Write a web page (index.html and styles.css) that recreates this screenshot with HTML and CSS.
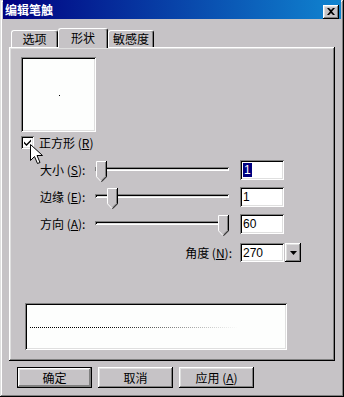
FILE: index.html
```html
<!DOCTYPE html>
<html lang="zh-CN">
<head>
  <meta charset="UTF-8">
  <title>编辑笔触</title>
  <link rel="stylesheet" href="styles.css">
</head>
<body>
  <div class="window">
    <div class="titlebar">
      <span class="title">编辑笔触</span>
      <button class="close-btn">
        <svg width="8" height="7" viewBox="0 0 8 7"><path d="M0 0h2l2 2 2-2h2L5 3.5 8 7H6L4 5 2 7H0l3-3.5z" fill="#000"/></svg>
      </button>
    </div>

    <div class="content">
      <!-- Tabs -->
      <div class="tabs">
        <div class="tab tab-first">选项</div>
        <div class="tab tab-active">形状</div>
        <div class="tab">敏感度</div>
      </div>

      <div class="panel">
        <div class="preview"><span class="dot"></span></div>

        <label class="check-row">
          <span class="checkbox">
            <svg width="7" height="7" viewBox="0 0 7 7"><path d="M0 2.5l2.5 2.5 4.5-4.5v2l-4.5 4.5-2.5-2.5z" fill="#000"/></svg>
          </span>
          <span>正方形 (<u>R</u>)</span>
        </label>

        <!-- Slider settings -->
        <div class="settings">
          <span class="label">大小 (<u>S</u>):</span>
          <div class="slider">
            <div class="track"></div>
            <svg class="thumb" style="left: 1px" width="11" height="21" viewBox="0 0 11 21">
              <polygon points="0,0 11,0 11,16 5.5,21 0,16" fill="#c6c3c6"/>
              <polyline points="5,20.5 0.5,15.8 0.5,0.5 10,0.5" fill="none" stroke="#fff"/>
              <polyline points="9.5,1 9.5,15.3 5.5,19.3" fill="none" stroke="#808080"/>
              <polyline points="10.5,0 10.5,15.8 5.5,20.8" fill="none" stroke="#000"/>
            </svg>
          </div>
          <div class="edit"><span class="sel">1</span></div>

          <span class="label">边缘 (<u>E</u>):</span>
          <div class="slider">
            <div class="track"></div>
            <svg class="thumb" style="left: 12px" width="11" height="21" viewBox="0 0 11 21">
              <polygon points="0,0 11,0 11,16 5.5,21 0,16" fill="#c6c3c6"/>
              <polyline points="5,20.5 0.5,15.8 0.5,0.5 10,0.5" fill="none" stroke="#fff"/>
              <polyline points="9.5,1 9.5,15.3 5.5,19.3" fill="none" stroke="#808080"/>
              <polyline points="10.5,0 10.5,15.8 5.5,20.8" fill="none" stroke="#000"/>
            </svg>
          </div>
          <div class="edit">1</div>

          <span class="label">方向 (<u>A</u>):</span>
          <div class="slider">
            <div class="track"></div>
            <svg class="thumb" style="left: 123px" width="11" height="21" viewBox="0 0 11 21">
              <polygon points="0,0 11,0 11,16 5.5,21 0,16" fill="#c6c3c6"/>
              <polyline points="5,20.5 0.5,15.8 0.5,0.5 10,0.5" fill="none" stroke="#fff"/>
              <polyline points="9.5,1 9.5,15.3 5.5,19.3" fill="none" stroke="#808080"/>
              <polyline points="10.5,0 10.5,15.8 5.5,20.8" fill="none" stroke="#000"/>
            </svg>
          </div>
          <div class="edit">60</div>

          <span class="label label-angle">角度 (<u>N</u>):</span>
          <div class="combo">
            <div class="edit edit-combo">270</div>
            <button class="combo-btn">
              <svg width="7" height="4" viewBox="0 0 7 4"><path d="M0 0h7L3.5 4z" fill="#000"/></svg>
            </button>
          </div>
        </div>

        <div class="stroke-preview"><div class="dotted"></div></div>
      </div>

      <div class="buttons">
        <button class="btn btn-default">确定</button>
        <button class="btn">取消</button>
        <button class="btn">应用 (<u>A</u>)</button>
      </div>
    </div>

    <!-- Mouse pointer -->
    <svg class="cursor" width="13" height="21" viewBox="0 0 13 21">
      <path d="M0.5 0.5v16l4-4 3 7 2.5-1-3-7h5.5z" fill="#fff" stroke="#000"/>
    </svg>
  </div>
</body>
</html>
```

FILE: styles.css
```css
/* General styles */
body {
  margin: 0;
  font-family: "Noto Sans CJK SC", "Liberation Sans", sans-serif;
  font-size: 12px;
  color: #000;
  background: #c6c3c6;
}

button {
  font-family: inherit;
  font-size: 12px;
  padding: 0;
  border: none;
  background: #c6c3c6;
}

/* Dialog window */
.window {
  position: relative;
  width: 344px;
  height: 397px;
  box-sizing: border-box;
  padding: 0 3px 3px 3px;
  background: #c6c3c6;
  box-shadow: inset -1px -1px #000, inset 1px 1px #dfdfdf,
              inset -2px -2px #808080, inset 2px 2px #fff;
  display: flex;
  flex-direction: column;
}

/* Title bar */
.titlebar {
  height: 19px;
  display: flex;
  align-items: center;
  justify-content: space-between;
  padding: 0 2px;
  background: linear-gradient(90deg, #000080, #1084d0);
}

.title {
  color: #fff;
  font-weight: bold;
  line-height: 19px;
}

.close-btn {
  width: 16px;
  height: 14px;
  margin-top: 4px;
  display: flex;
  align-items: center;
  justify-content: center;
  box-shadow: inset -1px -1px #000, inset 1px 1px #fff,
              inset -2px -2px #808080, inset 2px 2px #dfdfdf;
}

.content {
  padding: 9px 6px 0;
}

/* Tabs */
.tabs {
  height: 19px;
  display: flex;
  align-items: flex-end;
  padding-left: 2px;
}

.tab {
  width: 46px;
  height: 17px;
  box-sizing: border-box;
  border-top: 1px solid #fff;
  border-left: 1px solid #fff;
  border-right: 1px solid #000;
  border-radius: 3px 3px 0 0;
  box-shadow: inset -1px 0 #808080;
  text-align: center;
  line-height: 16px;
  background: #c6c3c6;
}

.tab-first {
  width: 47px;
}

.tab-active {
  position: relative;
  z-index: 1;
  width: 50px;
  height: 20px;
  margin-bottom: -1px;
  line-height: 17px;
}

/* Main panel */
.panel {
  height: 314px;
  box-sizing: border-box;
  padding: 10px 12px 0;
  box-shadow: inset -1px -1px #000, inset 1px 1px #fff,
              inset -2px -2px #808080, inset 2px 2px #dfdfdf;
}

.preview {
  width: 75px;
  height: 75px;
  position: relative;
  background: #fdfefd;
  box-shadow: inset 1px 1px #808080, inset -1px -1px #fff,
              inset 2px 2px #000, inset -2px -2px #dfdfdf;
}

.dot {
  position: absolute;
  left: 38px;
  top: 38px;
  width: 1px;
  height: 1px;
  background: #000;
}

.check-row {
  display: flex;
  align-items: center;
  gap: 5px;
  margin-top: 4px;
  height: 13px;
}

.checkbox {
  width: 13px;
  height: 13px;
  display: flex;
  align-items: center;
  justify-content: center;
  background: #fff;
  box-shadow: inset 1px 1px #808080, inset -1px -1px #fff,
              inset 2px 2px #000, inset -2px -2px #dfdfdf;
}

/* Slider grid */
.settings {
  display: grid;
  grid-template-columns: 44px 134px 44px;
  grid-auto-rows: 20px;
  column-gap: 11px;
  row-gap: 7px;
  margin: 11px 0 0 19px;
}

.label {
  line-height: 20px;
  white-space: nowrap;
}

.label-angle {
  grid-column: 1 / 3;
  justify-self: end;
  margin-right: -3px;
  margin-top: 2px;
}

.slider {
  position: relative;
}

.track {
  margin-top: 7px;
  height: 4px;
  box-shadow: inset 1px 1px #808080, inset -1px -1px #fff,
              inset 2px 2px #000, inset -2px -2px #dfdfdf;
}

.thumb {
  position: absolute;
  top: 1px;
}

.edit {
  height: 20px;
  box-sizing: border-box;
  padding: 3px 3px 0;
  background: #fff;
  font-family: "Liberation Sans", sans-serif;
  line-height: 14px;
  box-shadow: inset 1px 1px #808080, inset -1px -1px #fff,
              inset 2px 2px #000, inset -2px -2px #dfdfdf;
}

.sel {
  background: #000080;
  color: #fff;
  padding: 0 1px;
}

.combo {
  display: flex;
  gap: 1px;
  margin-top: 2px;
}

.edit-combo {
  width: 44px;
  flex: none;
  height: 19px;
}

.combo-btn {
  width: 16px;
  height: 19px;
  flex: none;
  display: flex;
  align-items: center;
  justify-content: center;
  box-shadow: inset -1px -1px #000, inset 1px 1px #fff,
              inset -2px -2px #808080, inset 2px 2px #dfdfdf;
}

/* Stroke preview */
.stroke-preview {
  width: 262px;
  height: 47px;
  margin: 42px 0 0 4px;
  box-sizing: border-box;
  padding: 24px 0 0 5px;
  background: #fdfefd;
  box-shadow: inset 1px 1px #808080, inset -1px -1px #fff,
              inset 2px 2px #000, inset -2px -2px #dfdfdf;
}

.dotted {
  width: 208px;
  height: 1px;
  background: repeating-linear-gradient(90deg, #000 0 1px, transparent 1px 2px);
  -webkit-mask-image: linear-gradient(90deg, #000 35%, transparent);
  mask-image: linear-gradient(90deg, #000 35%, transparent);
}

/* Bottom buttons */
.buttons {
  display: flex;
  gap: 6px;
  margin-top: 6px;
  padding-left: 8px;
}

.btn {
  width: 75px;
  height: 21px;
  box-sizing: border-box;
  box-shadow: inset -1px -1px #000, inset 1px 1px #fff,
              inset -2px -2px #808080, inset 2px 2px #dfdfdf;
}

.btn-default {
  border: 1px solid #000;
  box-shadow: inset -1px -1px #808080, inset 1px 1px #fff,
              inset -2px -2px #808080, inset 2px 2px #dfdfdf;
}

/* Mouse pointer overlay */
.cursor {
  position: absolute;
  left: 30px;
  top: 144px;
}
```
